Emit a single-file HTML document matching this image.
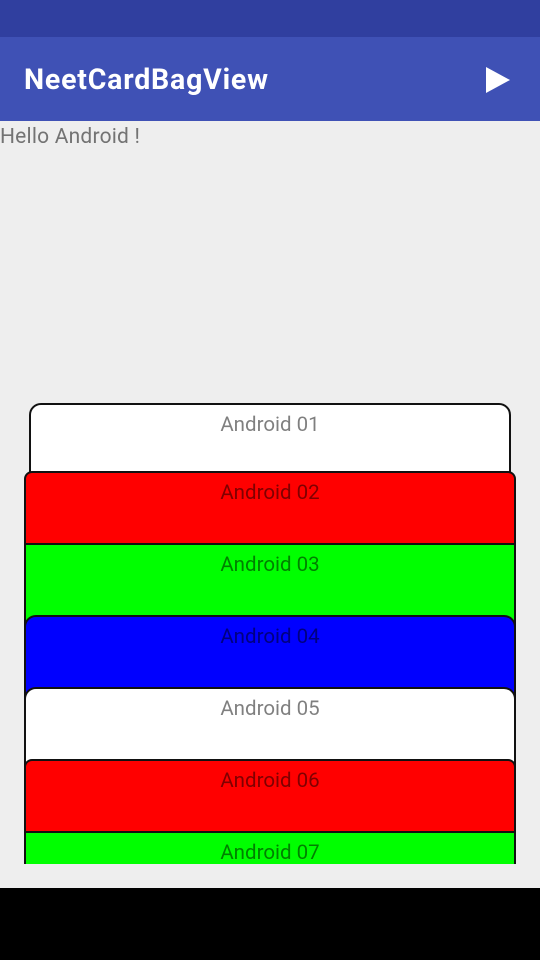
<!DOCTYPE html>
<html><head><style>
*{margin:0;padding:0;box-sizing:border-box}
html,body{width:540px;height:960px;overflow:hidden}
body{background:#eeeeee;position:relative;font-family:"Roboto","Liberation Sans",sans-serif}
.sb{position:absolute;left:0;top:0;width:540px;height:37px;background:#303f9f}
.tb{position:absolute;left:0;top:37px;width:540px;height:84px;background:#3f51b5}
.tb h1{position:absolute;left:24px;top:26px;font-size:28.5px;font-weight:bold;color:#fff;letter-spacing:0.8px}
.hello{position:absolute;left:0;top:125px;font-size:21px;color:#737373;letter-spacing:0.2px}
.clip{position:absolute;left:0;top:0;width:540px;height:864px;overflow:hidden}
.c{position:absolute;left:24px;width:492px;height:200px;border:2px solid #111;border-radius:12px;text-align:center;font-size:20.5px;color:rgba(0,0,0,0.5);padding-top:8px}
.nav{position:absolute;left:0;top:888px;width:540px;height:72px;background:#000}
</style></head><body>
<div class="sb"></div>
<div class="tb"><h1>NeetCardBagView</h1>
<svg style="position:absolute;left:484px;top:28px" width="28" height="30" viewBox="0 0 28 30"><path d="M2 2 L26 15 L2 28 Z" fill="#fff"/></svg></div>
<div class="hello">Hello Android !</div>
<div class="clip">
<div class="c" style="left:29px;width:482px;top:403px;background:#fff">Android 01</div>
<div class="c" style="top:471px;background:#f00;border-radius:8px">Android 02</div>
<div class="c" style="top:543px;background:#0f0;border-radius:0">Android 03</div>
<div class="c" style="top:615px;background:#00f">Android 04</div>
<div class="c" style="top:687px;background:#fff">Android 05</div>
<div class="c" style="top:759px;background:#f00;border-radius:8px">Android 06</div>
<div class="c" style="top:831px;background:#0f0;border-radius:0">Android 07</div>
</div>
<div class="nav"></div>
</body></html>
